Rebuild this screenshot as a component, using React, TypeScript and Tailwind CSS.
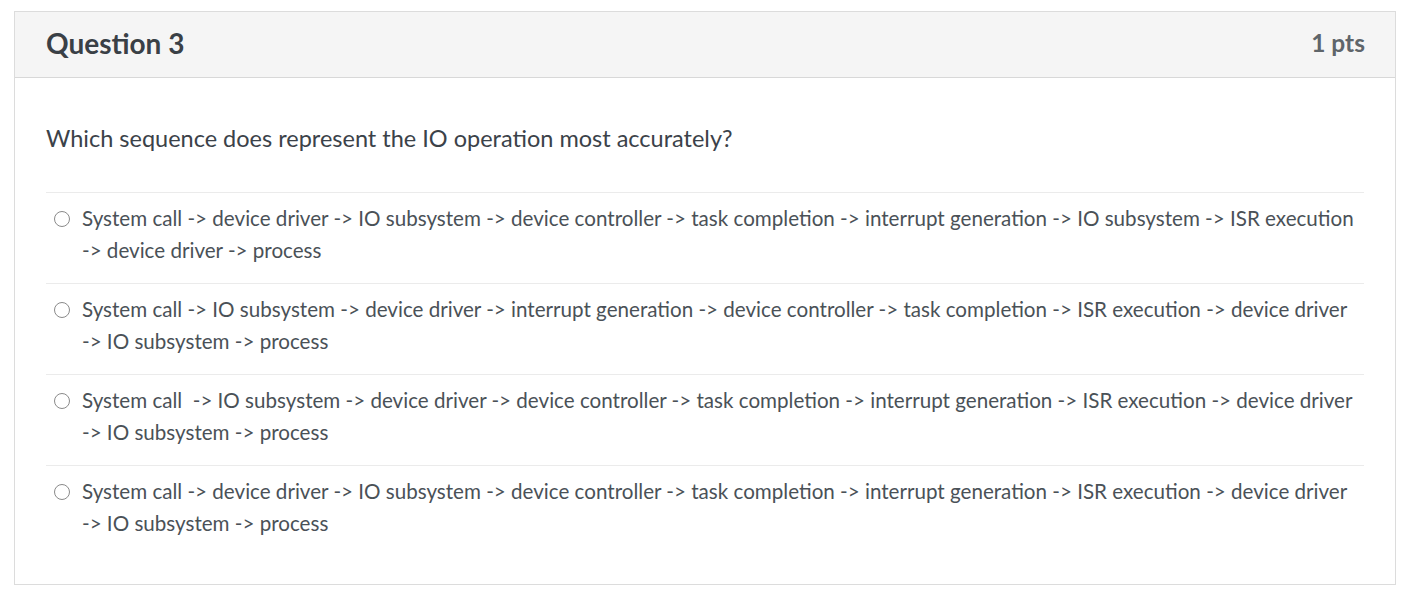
const answers = [
  "System call -> device driver -> IO subsystem -> device controller -> task completion -> interrupt generation -> IO subsystem -> ISR execution -> device driver -> process",
  "System call -> IO subsystem -> device driver -> interrupt generation -> device controller -> task completion -> ISR execution -> device driver -> IO subsystem -> process",
  "System call  -> IO subsystem -> device driver -> device controller -> task completion -> interrupt generation -> ISR execution -> device driver -> IO subsystem -> process",
  "System call -> device driver -> IO subsystem -> device controller -> task completion -> interrupt generation -> ISR execution -> device driver -> IO subsystem -> process",
];

// keep "->" together so lines never break between the hyphen and the arrow head
const noBreak = (s: string) => s.replaceAll("->", "-\u2060>");

export default function App() {
  return (
    <div className="min-h-[602px] w-[1410px] bg-white pt-[11px] pl-[14px] font-['Lato',sans-serif] text-[#2d3b45]">
      <div className="w-[1382px] border border-[#dcdcdc]">
        <div className="flex h-[66px] items-center justify-between border-b border-[#d8d8d8] bg-[#f5f5f5] pb-[3px] pl-[31px] pr-[30px]">
          <h2 className="text-[28px] font-bold text-[#3a4046]">Question 3</h2>
          <span className="text-[24.5px] font-bold text-[#5f656a]">1 pts</span>
        </div>
        <div className="px-[31px] pt-[44px] pb-[28px]">
          <p className="text-[23.5px] leading-[32px] text-[#3b4249]">Which sequence does represent the IO operation most accurately?</p>
          <div className="mt-[38px]">
            {answers.map((a, i) => (
              <label key={i} className="flex border-t border-[#ebebeb] pt-[9px] pb-[17px]">
                <span className="mt-[9px] ml-[8px] mr-[12px] h-[16px] w-[16px] shrink-0 rounded-full border border-[#8a8a8a] bg-white" />
                <span className="whitespace-pre-wrap text-[20.6px] leading-[32px] text-[#4a5157]">{noBreak(a)}</span>
              </label>
            ))}
          </div>
        </div>
      </div>
    </div>
  );
}
